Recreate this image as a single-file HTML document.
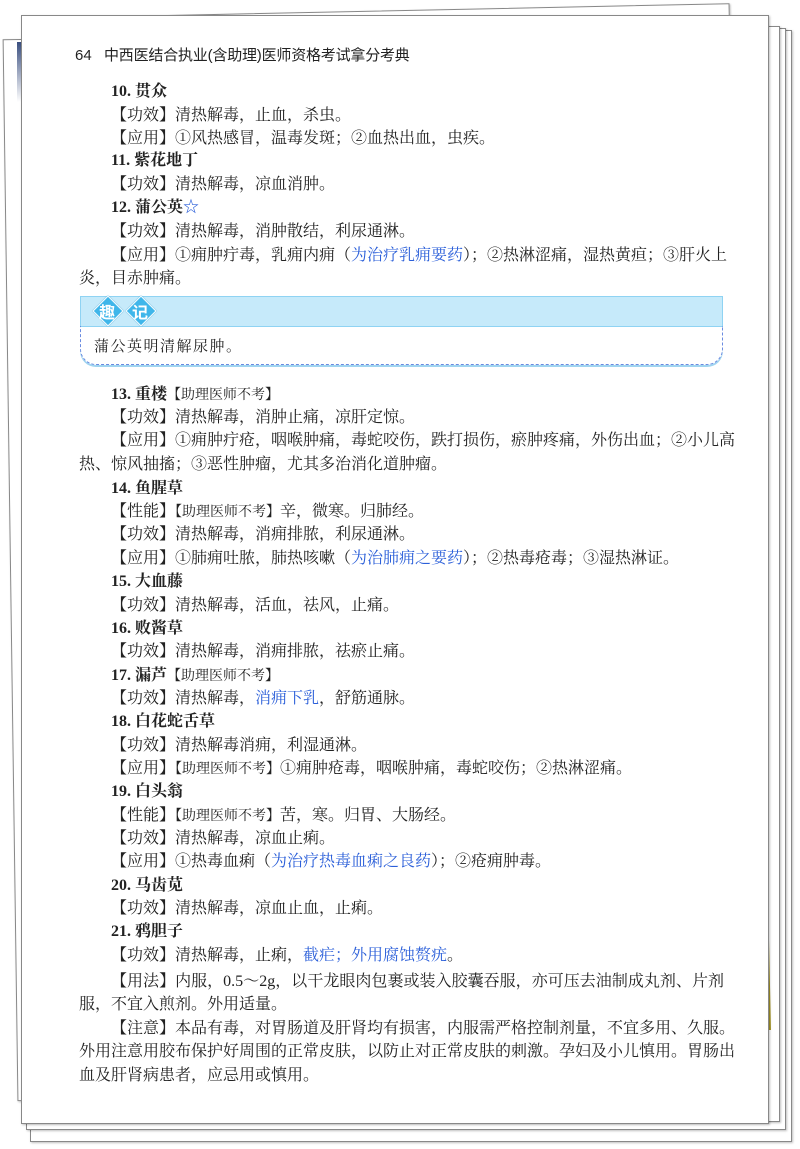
<!DOCTYPE html>
<html><head><meta charset="utf-8"><style>
html,body{margin:0;padding:0;background:#fff;}
body{width:800px;height:1149px;position:relative;overflow:hidden;font-family:"Liberation Serif","Noto Serif CJK SC","Noto Sans CJK SC",serif;color:#222;}
.pg{position:absolute;background:#fff;border:1px solid #888;box-shadow:1px 1px 2px rgba(0,0,0,.25);}
.l{position:absolute;left:79px;width:645px;height:24px;line-height:24px;font-size:16px;white-space:nowrap;}
.i{left:111px;width:613px;}
.j{text-align:justify;text-align-last:justify;}
.h{font-weight:bold;}
.b{color:#2b5fd9;}
.s{font-size:14px;}
.d{position:absolute;width:20px;height:20px;background:#3fb6ea;transform:rotate(45deg);border:1px solid #fff;box-shadow:0 0 1px #2a8fc0;}
.dt{position:absolute;width:28px;text-align:center;color:#fff;font-weight:bold;font-size:16px;line-height:28px;font-family:"Noto Sans CJK SC",sans-serif;}
</style></head><body>
<div class="pg" style="left:30px;top:30px;width:760px;height:1110px;"></div>
<div class="pg" style="left:26px;top:28px;width:758px;height:1100px;"></div>
<div class="pg" style="left:24px;top:26px;width:754px;height:1094px;"></div>
<div class="pg" style="left:10px;top:34px;width:740px;height:1060px;transform:rotate(-0.8deg);"></div>
<div style="position:absolute;left:17px;top:42px;width:5px;height:60px;background:linear-gradient(#3a4f80,#fff);"></div>
<div class="pg" style="left:80px;top:10px;width:648px;height:40px;transform:rotate(-1.2deg);"></div>
<div style="position:absolute;left:763px;top:780px;width:8px;height:250px;background:linear-gradient(90deg,#8a7a10,#b0a030);clip-path:polygon(0 0,30% 0,100% 100%,0 100%);"></div>
<div class="pg" style="left:21px;top:15px;width:746px;height:1107px;"></div>

<div style="position:absolute;left:75px;top:46px;font-family:'Liberation Sans','Noto Sans CJK SC',sans-serif;font-size:15px;line-height:20px;white-space:nowrap;"><span style="display:inline-block;width:29px">64</span><span style="letter-spacing:-0.2px">中西医结合执业(含助理)医师资格考试拿分考典</span></div>

<div class="l i h" style="top:80px">10. 贯众</div>
<div class="l i" style="top:104px">【功效】清热解毒，止血，杀虫。</div>
<div class="l i" style="top:127px">【应用】①风热感冒，温毒发斑；②血热出血，虫疾。</div>
<div class="l i h" style="top:149px">11. 紫花地丁</div>
<div class="l i" style="top:173px">【功效】清热解毒，凉血消肿。</div>
<div class="l i h" style="top:196px">12. 蒲公英<span class="b" style="font-weight:normal">☆</span></div>
<div class="l i" style="top:220px">【功效】清热解毒，消肿散结，利尿通淋。</div>
<div class="l i j" style="top:244px">【应用】①痈肿疔毒，乳痈内痈（<span class="b">为治疗乳痈要药</span>）；②热淋涩痛，湿热黄疸；③肝火上</div>
<div class="l" style="top:267px">炎，目赤肿痛。</div>

<div style="position:absolute;left:80px;top:296px;width:641px;height:29px;background:#c6eafa;border:1px solid #8fd3f3;"></div>
<div style="position:absolute;left:80px;top:326px;width:641px;height:38px;border:1px dashed #6a8be0;border-top:none;border-radius:0 0 16px 16px;box-shadow:0 2px 0 #9fd4f0;"></div>
<div class="d" style="left:97px;top:300px"></div><div class="dt" style="left:93px;top:297px">趣</div>
<div class="d" style="left:130px;top:300px"></div><div class="dt" style="left:126px;top:297px">记</div>
<div style="position:absolute;left:94px;top:336px;font-size:15px;line-height:20px;letter-spacing:1.5px;font-family:'Noto Serif CJK SC',serif;">蒲公英明清解尿肿。</div>

<div class="l i h" style="top:383px">13. 重楼<span class="s" style="font-weight:normal">【助理医师不考】</span></div>
<div class="l i" style="top:406px">【功效】清热解毒，消肿止痛，凉肝定惊。</div>
<div class="l i j" style="top:429px">【应用】①痈肿疔疮，咽喉肿痛，毒蛇咬伤，跌打损伤，瘀肿疼痛，外伤出血；②小儿高</div>
<div class="l" style="top:453px">热、惊风抽搐；③恶性肿瘤，尤其多治消化道肿瘤。</div>
<div class="l i h" style="top:477px">14. 鱼腥草</div>
<div class="l i" style="top:500px">【性能】<span class="s">【助理医师不考】</span>辛，微寒。归肺经。</div>
<div class="l i" style="top:523px">【功效】清热解毒，消痈排脓，利尿通淋。</div>
<div class="l i" style="top:547px">【应用】①肺痈吐脓，肺热咳嗽（<span class="b">为治肺痈之要药</span>）；②热毒疮毒；③湿热淋证。</div>
<div class="l i h" style="top:570px">15. 大血藤</div>
<div class="l i" style="top:594px">【功效】清热解毒，活血，祛风，止痛。</div>
<div class="l i h" style="top:617px">16. 败酱草</div>
<div class="l i" style="top:640px">【功效】清热解毒，消痈排脓，祛瘀止痛。</div>
<div class="l i h" style="top:664px">17. 漏芦<span class="s" style="font-weight:normal">【助理医师不考】</span></div>
<div class="l i" style="top:687px">【功效】清热解毒，<span class="b">消痈下乳</span>，舒筋通脉。</div>
<div class="l i h" style="top:710px">18. 白花蛇舌草</div>
<div class="l i" style="top:734px">【功效】清热解毒消痈，利湿通淋。</div>
<div class="l i" style="top:757px">【应用】<span class="s">【助理医师不考】</span>①痈肿疮毒，咽喉肿痛，毒蛇咬伤；②热淋涩痛。</div>
<div class="l i h" style="top:780px">19. 白头翁</div>
<div class="l i" style="top:804px">【性能】<span class="s">【助理医师不考】</span>苦，寒。归胃、大肠经。</div>
<div class="l i" style="top:827px">【功效】清热解毒，凉血止痢。</div>
<div class="l i" style="top:850px">【应用】①热毒血痢（<span class="b">为治疗热毒血痢之良药</span>）；②疮痈肿毒。</div>
<div class="l i h" style="top:874px">20. 马齿苋</div>
<div class="l i" style="top:897px">【功效】清热解毒，凉血止血，止痢。</div>
<div class="l i h" style="top:920px">21. 鸦胆子</div>
<div class="l i" style="top:944px">【功效】清热解毒，止痢，<span class="b">截疟；外用腐蚀赘疣</span>。</div>
<div class="l i j" style="top:970px">【用法】内服，0.5～2g，以干龙眼肉包裹或装入胶囊吞服，亦可压去油制成丸剂、片剂</div>
<div class="l" style="top:993px">服，不宜入煎剂。外用适量。</div>
<div class="l i j" style="top:1017px">【注意】本品有毒，对胃肠道及肝肾均有损害，内服需严格控制剂量，不宜多用、久服。</div>
<div class="l j" style="top:1040px">外用注意用胶布保护好周围的正常皮肤，以防止对正常皮肤的刺激。孕妇及小儿慎用。胃肠出</div>
<div class="l" style="top:1064px">血及肝肾病患者，应忌用或慎用。</div>
</body></html>
